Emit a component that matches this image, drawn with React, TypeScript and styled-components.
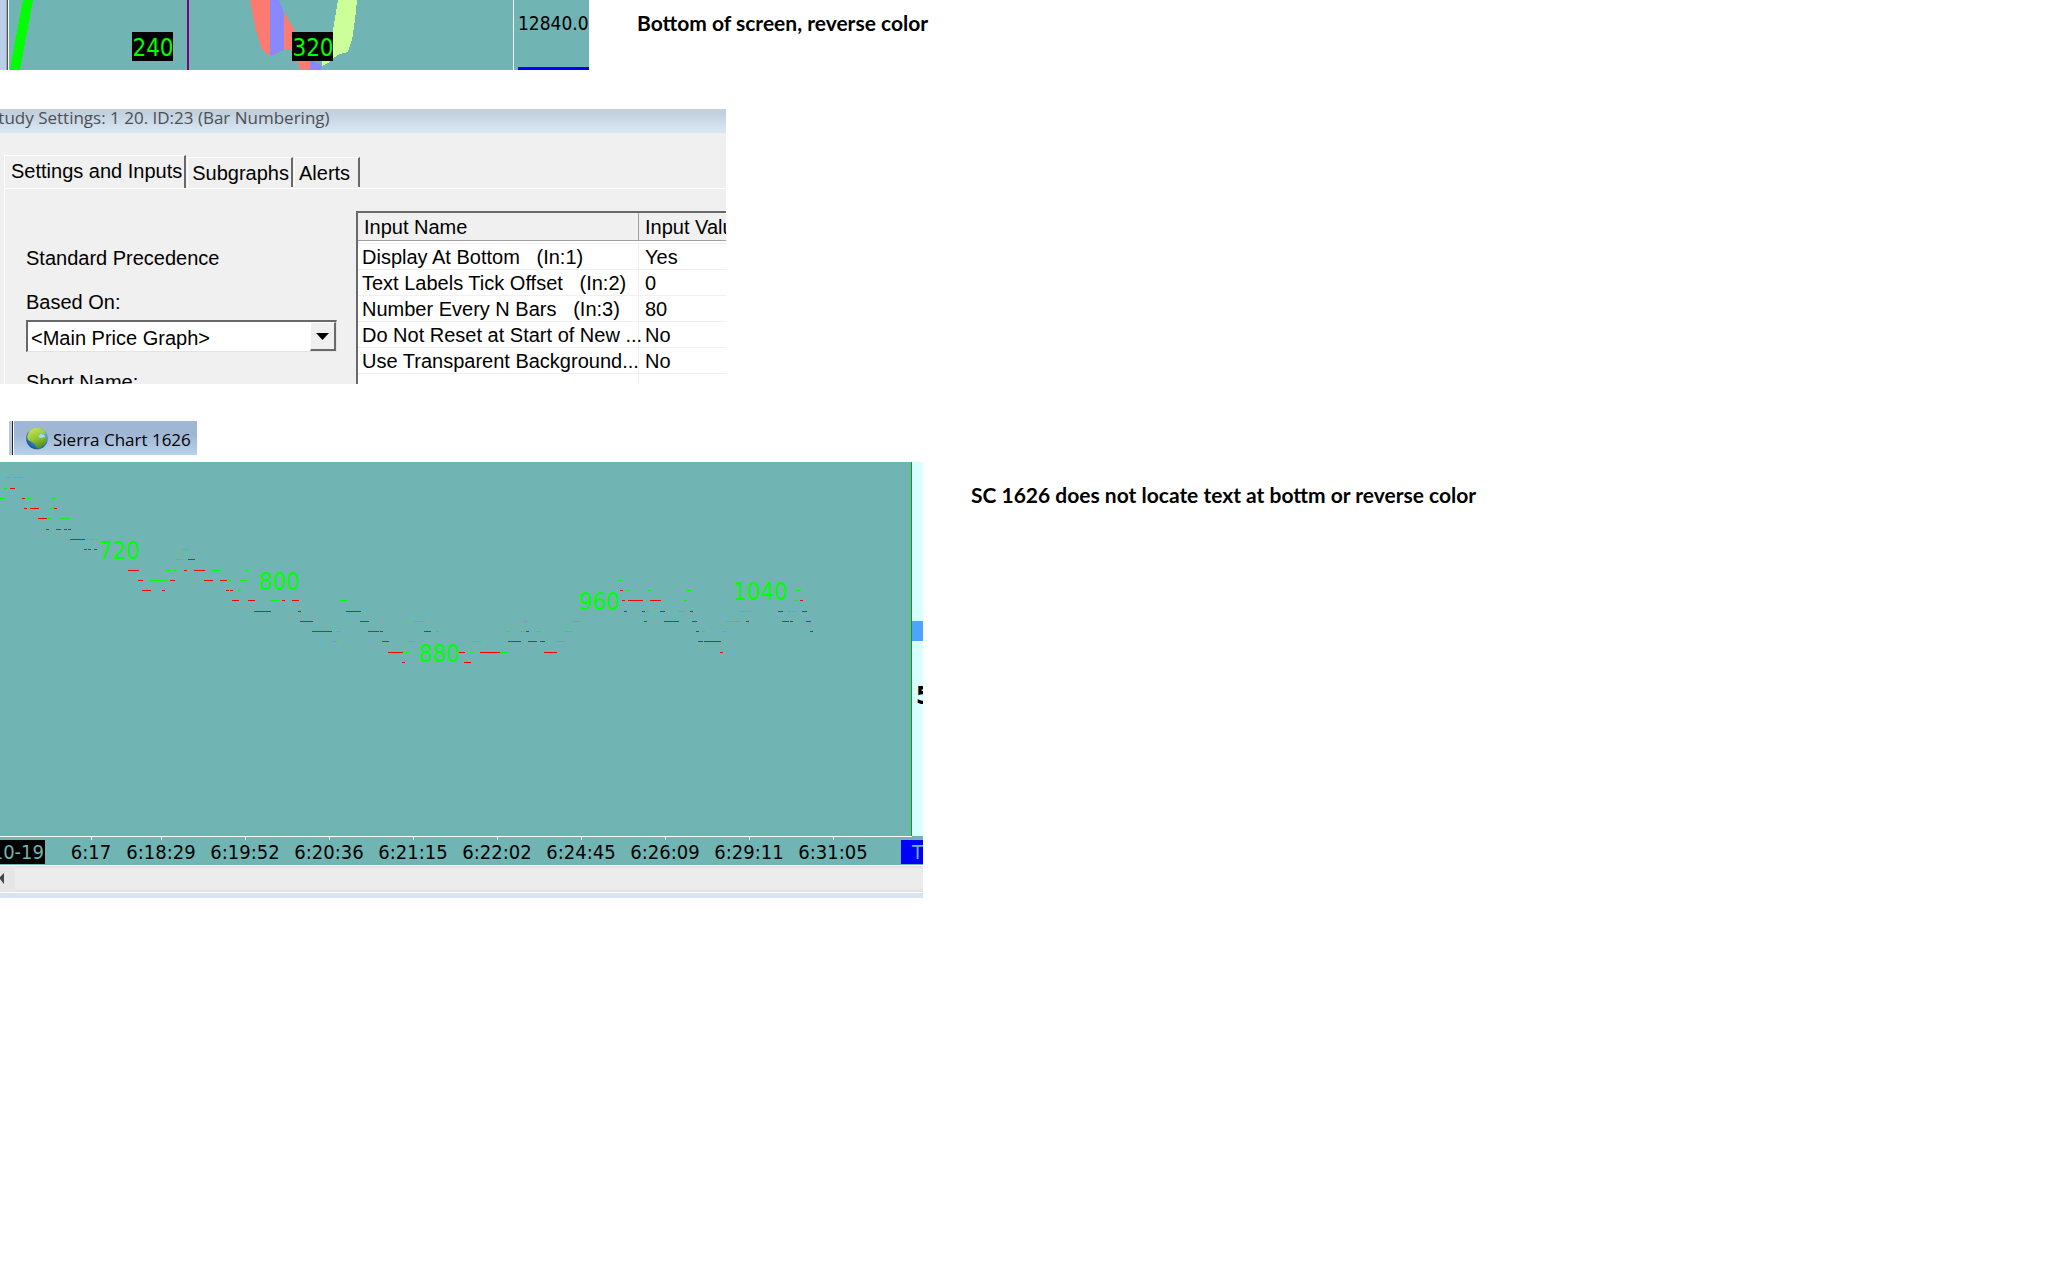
import React from "react";
import styled, { createGlobalStyle } from "styled-components";

const teal = "#70b4b4";
const chartFont = '"DejaVu Sans Condensed", "DejaVu Sans", sans-serif';
const dialogFont = '"Liberation Sans", Arial, sans-serif';
const captionFont = '"Open Sans", "Noto Sans", sans-serif';

const GlobalStyle = createGlobalStyle`
  *, *::before, *::after { box-sizing: border-box; }
  body { margin: 0; background: #fff; color: #000; font-family: ${dialogFont}; }
`;

const Page = styled.main`
  display: flex;
  flex-direction: column;
  align-items: stretch;
`;

const Section = styled.section<{ $before?: number }>`
  display: flex;
  align-items: flex-start;
  gap: 48px;
  margin-top: ${(p) => p.$before ?? 0}px;
`;

const Note = styled.p<{ $top: number }>`
  margin: 0;
  padding-top: ${(p) => p.$top}px;
  font: bold 21px/24px Lato, sans-serif;
  white-space: nowrap;
`;

const Strip = styled.div`
  display: flex;
  flex: 0 0 589px;
  height: 70px;
  overflow: hidden;
  background: ${teal};
`;

const Drawing = styled.svg`
  display: block;
  flex: none;
`;

const PriceAxis = styled.div`
  display: flex;
  flex: 1;
  flex-direction: column;
  justify-content: space-between;
  min-width: 0;
  padding-left: 4px;
  border-left: 1px solid #fff;
  font: 19px/24px ${chartFont};
`;

const Price = styled.span`
  padding-top: 11px;
  white-space: nowrap;
`;

const PriceMark = styled.div`
  height: 3px;
  background: #0000ff;
`;

const Dialog = styled.div`
  flex: 0 0 726px;
  height: 275px;
  overflow: hidden;
  background: #f0f0f0;
  font-size: 20px;
  line-height: 24px;
`;

const DialogCaption = styled.h2`
  margin: 0;
  height: 24px;
  text-indent: -11px;
  overflow: hidden;
  background: linear-gradient(#c3d0de 20%, #d7e4f2 85%);
  color: #4c5054;
  font: 17px/18px ${captionFont};
  white-space: nowrap;
`;

const TabList = styled.div`
  display: flex;
  align-items: flex-end;
  height: 55px;
  padding-left: 4px;
`;

const Tab = styled.button<{ $active?: boolean }>`
  height: ${(p) => (p.$active ? 33 : 30)}px;
  margin: 0 1px ${(p) => (p.$active ? 0 : 1)}px 0;
  padding: 0 2px ${(p) => (p.$active ? 3 : 0)}px ${(p) => (p.$active ? 6 : 4)}px;
  border: 0;
  border-top: 1px solid #fff;
  border-left: 1px solid #fff;
  border-right: 2px solid #696969;
  background: #f0f0f0;
  font: 20px/24px ${dialogFont};
  color: #000;
  white-space: nowrap;

  &:last-child { padding-right: 8px; }
`;

const TabPage = styled.div`
  display: flex;
  height: 196px;
  margin-left: 4px;
  border-left: 1px solid #fff;
  border-top: 1px solid #fff;
`;

const Form = styled.form`
  display: flex;
  flex: 0 0 351px;
  flex-direction: column;
  padding: 57px 19px 0 21px;
`;

const Precedence = styled.span`
  margin-bottom: 20px;
`;

const FieldLabel = styled.label`
  margin-bottom: 6px;
`;

const SelectBox = styled.div`
  position: relative;
  flex: none;
  height: 32px;
  margin-bottom: 18px;
  border: 2px solid #696969;
  border-bottom: 1px solid #e3e3e3;
  border-right: 1px solid #e3e3e3;
  background: #fff;
`;

const Select = styled.select`
  display: block;
  width: 100%;
  height: 29px;
  padding: 2px 0 0 3px;
  border: 0;
  appearance: none;
  background: transparent;
  color: #000;
  font: 20px/24px ${dialogFont};
`;

const DropGlyph = styled.span`
  position: absolute;
  top: 0;
  right: 0;
  display: flex;
  align-items: center;
  justify-content: center;
  width: 26px;
  height: 29px;
  border: 1px solid #fff;
  border-right: 2px solid #696969;
  border-bottom: 2px solid #696969;
  background: #f0f0f0;
  pointer-events: none;
`;

const InputsFrame = styled.div`
  flex: 1;
  min-width: 0;
  margin-top: 22px;
  overflow: hidden;
  border-top: 2px solid #696969;
  border-left: 2px solid #696969;
  background: #fff;
`;

const InputsTable = styled.table`
  width: 420px;
  border-collapse: separate;
  border-spacing: 0;
  table-layout: fixed;
  white-space: pre;
  text-align: left;

  th {
    height: 28px;
    padding: 0 0 0 6px;
    border-right: 1px solid #a0a0a0;
    border-bottom: 1px solid #a0a0a0;
    background: #f0f0f0;
    font-weight: normal;
  }
  th:first-child { width: 281px; }
  tbody::before { content: ""; display: block; height: 2px; }
  td {
    height: 26px;
    padding: 0 0 0 6px;
    border-right: 1px solid #f0f0f0;
    border-top: 1px solid #f0f0f0;
  }
  td:first-child { padding-left: 4px; }
`;

const Taskbar = styled.div`
  display: flex;
  align-items: center;
  flex: 0 0 188px;
  height: 34px;
  margin-left: 9px;
  overflow: hidden;
  border-left: 3px solid #b7c9dc;
  background: linear-gradient(#9fb7d5 40%, #b9d0ea);
  font: 17px/24px ${captionFont};
  white-space: nowrap;
`;

const TaskEdge = styled.span`
  flex: none;
  width: 2px;
  height: 34px;
  margin-right: 12px;
  background: #26282c;
  border-right: 1px solid #fff;
`;

const TaskText = styled.span`
  padding: 3px 0 0 5px;
`;

const ChartWindow = styled.div`
  flex: 0 0 923px;
  overflow: hidden;
  background: ${teal};
`;

const TimeAxis = styled.div`
  display: flex;
  height: 25px;
  font: 20px/25px ${chartFont};
`;

const DateBadge = styled.span`
  display: flex;
  justify-content: flex-end;
  width: 45px;
  height: 24px;
  margin-right: 18px;
  padding-right: 1px;
  overflow: hidden;
  background: #000;
  color: ${teal};
  white-space: nowrap;
`;

const Time = styled.span<{ $width: number }>`
  width: ${(p) => p.$width}px;
  text-align: center;
  white-space: nowrap;
`;

const TradeBadge = styled.span`
  width: 22px;
  height: 24px;
  margin-left: auto;
  padding-left: 11px;
  overflow: hidden;
  background: #0000ff;
  color: ${teal};
`;

const ScrollBar = styled.div`
  height: 28px;
  border-top: 1px solid #fff;
  border-bottom: 1px solid #fff;
  background: linear-gradient(#dedede, #ececec 3px, #ececec 22px, #e0e0e0);
`;

const WindowEdge = styled.div`
  height: 5px;
  background: #d7e4f2;
`;

/* Bars grouped by price level: [y, [x, width, x, width, ...]] */
type Level = [number, number[]];

const upBars: Level[] = [
  [15, [6, 5, 14, 9]],
  [26, [4, 3]],
  [36, [0, 5, 26, 5, 52, 3]],
  [46, [50, 3]],
  [56, [48, 3, 60, 5, 66, 3]],
  [77, [86, 3, 90, 5, 96, 2]],
  [87, [182, 3, 186, 3]],
  [97, [176, 7]],
  [108, [166, 5, 174, 3, 212, 9, 246, 3]],
  [118, [150, 13, 164, 3, 228, 3, 240, 7, 618, 3]],
  [128, [238, 3, 626, 3, 648, 3, 686, 5, 796, 5]],
  [138, [270, 9, 340, 7, 684, 3, 794, 3]],
  [149, [646, 3, 678, 7, 740, 7, 748, 3, 788, 3, 792, 3]],
  [159, [414, 11, 524, 3, 572, 9, 726, 15]],
  [169, [336, 5, 378, 3, 436, 3, 506, 3, 520, 5, 536, 5, 564, 9, 702, 3, 722, 5]],
  [179, [332, 5, 408, 7, 472, 9, 556, 9]],
  [190, [404, 5, 470, 3, 500, 7]],
];

const downBars: Level[] = [
  [26, [10, 5]],
  [36, [22, 3]],
  [46, [24, 3, 30, 9, 54, 3]],
  [56, [38, 9]],
  [67, [46, 3, 56, 5, 64, 3, 68, 3]],
  [77, [70, 15]],
  [87, [84, 3, 88, 3, 94, 3]],
  [97, [188, 7]],
  [108, [128, 11, 184, 3, 194, 11]],
  [118, [138, 5, 170, 5, 204, 9, 220, 7]],
  [128, [142, 9, 162, 3, 226, 3, 230, 3, 620, 3]],
  [138, [232, 7, 248, 7, 282, 3, 292, 7, 622, 3, 628, 15, 650, 11, 800, 3]],
  [149, [254, 17, 298, 3, 346, 15, 624, 3, 642, 3, 660, 5, 690, 3, 778, 5, 802, 5]],
  [159, [300, 13, 360, 9, 644, 3, 664, 15, 692, 5, 746, 3, 782, 7, 790, 3, 806, 5]],
  [169, [312, 20, 368, 11, 380, 3, 424, 7, 526, 3, 696, 3, 810, 3]],
  [179, [382, 7, 508, 13, 528, 9, 540, 5, 698, 5, 704, 17]],
  [190, [388, 15, 459, 6, 480, 20, 544, 13, 720, 3]],
  [200, [402, 3, 464, 7]],
];

const barNumbers = [
  { x: 119, y: 97, n: 720 },
  { x: 279, y: 128, n: 800 },
  { x: 439, y: 200, n: 880 },
  { x: 599, y: 148, n: 960 },
  { x: 760, y: 138, n: 1040 },
];

const tickXs = [91, 161, 245, 329, 413, 497, 581, 665, 749, 833];
const times = ["6:18:29", "6:19:52", "6:20:36", "6:21:15", "6:22:02", "6:24:45", "6:26:09", "6:29:11", "6:31:05"];

const inputs = [
  ["Display At Bottom   (In:1)", "Yes"],
  ["Text Labels Tick Offset   (In:2)", "0"],
  ["Number Every N Bars   (In:3)", "80"],
  ["Do Not Reset at Start of New ...", "No"],
  ["Use Transparent Background...", "No"],
];

const levelsToPath = (levels: Level[]) =>
  levels
    .map(([y, runs]) => {
      let d = "";
      for (let i = 0; i < runs.length; i += 2) d += `M${runs[i]} ${y}h${runs[i + 1]}v1h-${runs[i + 1]}z`;
      return d;
    })
    .join("");

function BottomStrip() {
  return (
    <Strip>
      <Drawing width="513" height="70" fontFamily={chartFont} fontSize="24" textAnchor="middle">
        <rect width="7" height="70" fill="#b9cfe8" />
        <rect x="6" width="1" height="70" fill="#9aa4b0" />
        <rect x="7" width="1" height="70" fill="#555" />
        <rect x="8" width="1" height="70" fill="#fff" />
        <g shapeRendering="crispEdges">
          <path d="M23 0H33L20 70H10L12 58Z" fill="#00ff00" />
          <rect x="187" width="2" height="70" fill="#800080" />
          <path d="M250 0H270V55L265 53L261 47L255 27ZM284 12L295 31L310 61V70H301L297 61L293 53L290 50L284 50Z" fill="#ff7b71" />
          <path d="M270 0H279L284 12V50L279 52L274 55H270ZM310 60L315 62L319 64L322 66L320 70H310Z" fill="#8888ff" />
          <path d="M338 0H357L355 20L352 40L348 52L340 54L335 57L328 63L322 66V62L328 50L333 30Z" fill="#ccff99" />
        </g>
        <rect x="132" y="32" width="41" height="29" />
        <rect x="292" y="32" width="41" height="29" />
        <text x="153" y="56" fill="#00ff00">240</text>
        <text x="313" y="56" fill="#00ff00">320</text>
      </Drawing>
      <PriceAxis>
        <Price>12840.0</Price>
        <PriceMark />
      </PriceAxis>
    </Strip>
  );
}

function StudySettings() {
  return (
    <Dialog>
      <DialogCaption>Study Settings: 1 20. ID:23 (Bar Numbering)</DialogCaption>
      <TabList role="tablist">
        <Tab role="tab" aria-selected $active>Settings and Inputs</Tab>
        <Tab role="tab">Subgraphs</Tab>
        <Tab role="tab">Alerts</Tab>
      </TabList>
      <TabPage>
        <Form>
          <Precedence>Standard Precedence</Precedence>
          <FieldLabel htmlFor="based-on">Based On:</FieldLabel>
          <SelectBox>
            <Select id="based-on">
              <option>&lt;Main Price Graph&gt;</option>
            </Select>
            <DropGlyph>
              <svg width="13" height="7"><path d="M0 0H13L6.5 7Z" /></svg>
            </DropGlyph>
          </SelectBox>
          <span>Short Name:</span>
        </Form>
        <InputsFrame>
          <InputsTable>
            <thead>
              <tr><th>Input Name</th><th>Input Value</th></tr>
            </thead>
            <tbody>
              {inputs.map(([name, value]) => (
                <tr key={name}><td>{name}</td><td>{value}</td></tr>
              ))}
              <tr><td /><td /></tr>
            </tbody>
          </InputsTable>
        </InputsFrame>
      </TabPage>
    </Dialog>
  );
}

function Globe() {
  return (
    <Drawing width="22" height="23" viewBox="0 0 22 23">
      <defs>
        <radialGradient id="sea" cx="0.6" cy="0.35" r="0.7">
          <stop offset="0" stopColor="#9fd8ee" />
          <stop offset="0.6" stopColor="#3d8fc8" />
          <stop offset="1" stopColor="#164a8c" />
        </radialGradient>
        <linearGradient id="land" x2="0.4" y2="1">
          <stop offset="0" stopColor="#cfe86a" />
          <stop offset="0.6" stopColor="#93c52c" />
          <stop offset="1" stopColor="#5a8f1c" />
        </linearGradient>
      </defs>
      <circle cx="11" cy="11.5" r="10.8" fill="url(#sea)" />
      <path d="M4 3Q8 0 14 1L19 4L20 8L17 6L14 6L15 8L12 9L13 11L19 10L21 12Q20 17 16 19L14 22L11 21L9 17L6 15L2 13L1 10Q2 6 4 3Z" fill="url(#land)" />
      <path d="M13 9L15 7L18 8L19 10L14 11Z" fill="#a5dbe8" />
    </Drawing>
  );
}

function PriceChart() {
  return (
    <ChartWindow>
      <Drawing width="923" height="378" fontFamily={chartFont} fontSize="24">
        <path d={levelsToPath(upBars)} fill="#00ff00" />
        <path d={levelsToPath(downBars)} fill="#ff0000" />
        <g fill="#00ff00" textAnchor="middle">
          {barNumbers.map((b) => (
            <text key={b.n} x={b.x} y={b.y}>{b.n}</text>
          ))}
        </g>
        <rect x="911" width="1" height="374" fill="#00a800" />
        <rect x="912" width="11" height="374" fill="#d9ffff" />
        <rect x="912" y="159" width="11" height="20" fill="#4da3ff" />
        <text x="916" y="242" fontWeight="bold">5</text>
        <rect y="374" width="912" height="1" fill="#fff" />
        {tickXs.map((x) => (
          <rect key={x} x={x} y="375" width="1" height="3" fill="#fff" />
        ))}
      </Drawing>
      <TimeAxis>
        <DateBadge>10-19</DateBadge>
        <Time $width={56}>6:17</Time>
        {times.map((t) => (
          <Time key={t} $width={84}>{t}</Time>
        ))}
        <TradeBadge>T</TradeBadge>
      </TimeAxis>
      <ScrollBar>
        <Drawing width="16" height="25">
          <rect width="15" height="25" fill="#e6e6e6" />
          <path d="M4 7V18L0 13V11Z" fill="#444" />
        </Drawing>
      </ScrollBar>
      <WindowEdge />
    </ChartWindow>
  );
}

export default function App() {
  return (
    <Page>
      <GlobalStyle />
      <Section>
        <BottomStrip />
        <Note $top={11}>Bottom of screen, reverse color</Note>
      </Section>
      <Section $before={39}>
        <StudySettings />
      </Section>
      <Section $before={37}>
        <Taskbar>
          <TaskEdge />
          <Globe />
          <TaskText>Sierra Chart 1626 1</TaskText>
        </Taskbar>
      </Section>
      <Section $before={7}>
        <PriceChart />
        <Note $top={21}>SC 1626 does not locate text at bottm or reverse color</Note>
      </Section>
    </Page>
  );
}
